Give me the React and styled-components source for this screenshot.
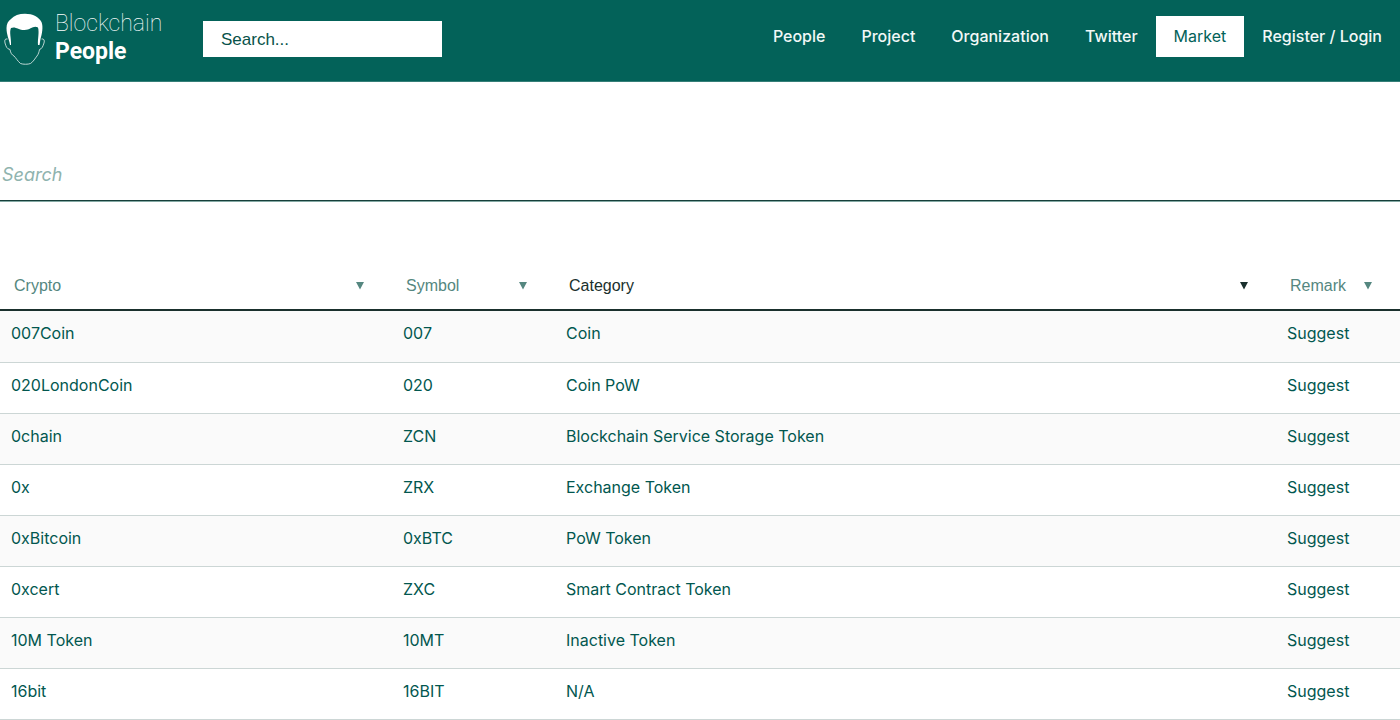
import React from "react";
import styled, { createGlobalStyle } from "styled-components";

const GlobalStyle = createGlobalStyle`
  *, *::before, *::after { box-sizing: border-box; }
  body {
    margin: 0;
    background: #fff;
    color: #02574f;
    font-family: Inter, "Liberation Sans", sans-serif;
    font-size: 16px;
    line-height: 24px;
  }
  a { color: inherit; text-decoration: none; }
`;

const Header = styled.header`
  display: flex;
  align-items: flex-start;
  height: 82px;
  background: #036259;
  border-bottom: 1px solid #357f78;
`;

const Brand = styled.a`
  display: flex;
  gap: 10px;
  flex: none;
  width: 203px;
  padding: 10px 0 0 4px;
  color: #fff;
`;

const Face = styled.svg`
  width: 41px;
  height: 54px;
  margin-top: 2px;
`;

const BrandText = styled.span`
  display: flex;
  flex-direction: column;
  font-family: Roboto, sans-serif;
  font-size: 23px;
  line-height: 28px;
`;

const BrandTop = styled.span`
  font-weight: 100;
`;

const BrandBottom = styled.span`
  font-weight: 700;
`;

const HeaderSearch = styled.input`
  width: 239px;
  height: 36px;
  margin-top: 21px;
  padding: 1px 18px 0;
  border: 0;
  border-radius: 0;
  background: #fff;
  color: #075249;
  font-family: "Liberation Sans", Arial, sans-serif;
  font-size: 17px;
  &::placeholder { color: #075249; opacity: 1; }
`;

const Nav = styled.nav`
  display: flex;
  flex: none;
  margin-left: auto;
  padding-top: 16px;
`;

const NavLink = styled.a`
  padding: 0 18px;
  background: ${(p) => (p.$active ? "#fff" : "transparent")};
  color: ${(p) => (p.$active ? "#036259" : "#f2f8f7")};
  font-size: 16px;
  font-weight: ${(p) => (p.$active ? 400 : 500)};
  line-height: 41px;
  white-space: nowrap;
`;

const TableSearch = styled.input`
  display: block;
  width: 100%;
  height: 53px;
  margin: 66px 0 59px;
  padding: 1px 2px 0;
  border: 0;
  border-bottom: 1px solid #163f3a;
  border-radius: 0;
  outline: 0;
  box-shadow: 0 1px 0 #84a9a4;
  color: #036259;
  font-family: inherit;
  font-size: 18px;
  &::placeholder { color: #8fb3ae; font-style: italic; opacity: 1; }
`;

const Table = styled.table`
  width: 100%;
  table-layout: fixed;
  border-collapse: separate;
  border-spacing: 0;
`;

const Col = styled.col`
  width: ${(p) => p.$width};
`;

const HeadCell = styled.th`
  height: 51px;
  padding: 2px 28px 0 14px;
  border-bottom: 2px solid #1a302d;
`;

const SortButton = styled.button`
  display: flex;
  align-items: center;
  justify-content: space-between;
  width: 100%;
  padding: 0;
  border: 0;
  background: none;
  color: ${(p) => (p.$active ? "#1a302d" : "#558780")};
  font-family: "Liberation Sans", Arial, sans-serif;
  font-size: 16px;
  line-height: 24px;
`;

const Arrow = styled.svg`
  width: 8px;
  height: 8px;
  fill: currentColor;
`;

const Row = styled.tr`
  background: ${(p) => (p.$striped ? "#fafafa" : "#fff")};
`;

const Cell = styled.td`
  padding: 10px 12px 16px 11px;
  border-bottom: 1px solid #ccd6d5;
  white-space: nowrap;
  ${Row}:first-child & { padding-bottom: 17px; }
`;

const links = ["People", "Project", "Organization", "Twitter", "Market", "Register / Login"];

const columns = [
  { name: "Crypto", width: "392px" },
  { name: "Symbol", width: "163px" },
  { name: "Category", width: "auto", active: true },
  { name: "Remark", width: "124px" },
];

const coins = [
  ["007Coin", "007", "Coin"],
  ["020LondonCoin", "020", "Coin PoW"],
  ["0chain", "ZCN", "Blockchain Service Storage Token"],
  ["0x", "ZRX", "Exchange Token"],
  ["0xBitcoin", "0xBTC", "PoW Token"],
  ["0xcert", "ZXC", "Smart Contract Token"],
  ["10M Token", "10MT", "Inactive Token"],
  ["16bit", "16BIT", "N/A"],
];

function Logo() {
  return (
    <Face viewBox="0 0 41 54" aria-hidden="true">
      <path
        fill="#fff"
        d="M6 33 C5 27 2.500 23 2.500 16 C2.500 12 4 9 7 7 C10 3.500 15 1.700 21 1.700 C29 1.700 35 5 37.500 10 C39.500 15 38 22 36.500 27 L35.500 33 L34 33 C33.500 27 35.500 21 34 15.500 C29 13 27 18 20.500 18 C14 18 11.500 14 7 16 C5 20 7.500 27 7 33 Z"
      />
      <path
        fill="none"
        stroke="#cfe2e0"
        strokeWidth="0.9"
        strokeLinejoin="round"
        d="M3.500 27 C1 26.500 0.300 28 1 31 C2 34 2.500 37 6 37.500 C6.500 41 8 43 10 44 C12 46 13.500 49 16.500 51.500 C19 52.500 24 52.500 26.500 51.500 C29.500 49.500 31 46.500 33 44 C34.500 42 35 40 35.500 37.500 C38 37 39 34 40 31 C41 28 39.500 26.500 37.500 27"
      />
    </Face>
  );
}

export default function App() {
  return (
    <>
      <GlobalStyle />
      <Header>
        <Brand href="#">
          <Logo />
          <BrandText>
            <BrandTop>Blockchain</BrandTop>
            <BrandBottom>People</BrandBottom>
          </BrandText>
        </Brand>
        <HeaderSearch type="text" aria-label="Search the site" placeholder="Search..." />
        <Nav>
          {links.map((label) => (
            <NavLink key={label} href="#" $active={label === "Market"}>
              {label}
            </NavLink>
          ))}
        </Nav>
      </Header>
      <main>
        <TableSearch type="text" aria-label="Search the table" placeholder="Search" />
        <Table>
          <colgroup>
            {columns.map((c) => (
              <Col key={c.name} $width={c.width} />
            ))}
          </colgroup>
          <thead>
            <tr>
              {columns.map((c) => (
                <HeadCell key={c.name} scope="col">
                  <SortButton type="button" $active={c.active}>
                    {c.name}
                    <Arrow viewBox="0 0 8 8" aria-hidden="true">
                      <path d="M0 0 H8 L4 7.500 Z" />
                    </Arrow>
                  </SortButton>
                </HeadCell>
              ))}
            </tr>
          </thead>
          <tbody>
            {coins.map(([name, symbol, category], i) => (
              <Row key={name} $striped={i % 2 === 0}>
                <Cell><a href="#">{name}</a></Cell>
                <Cell>{symbol}</Cell>
                <Cell>{category}</Cell>
                <Cell><a href="#">Suggest</a></Cell>
              </Row>
            ))}
          </tbody>
        </Table>
      </main>
    </>
  );
}
